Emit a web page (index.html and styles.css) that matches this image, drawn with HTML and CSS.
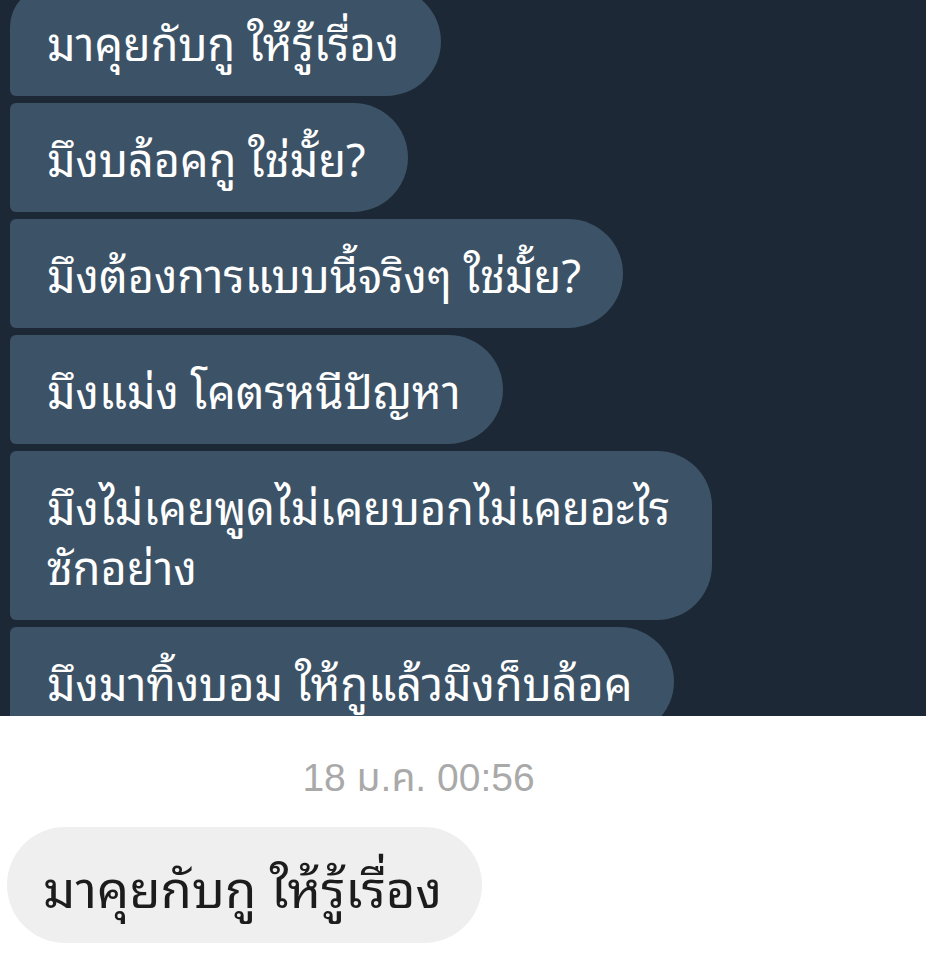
FILE: index.html
```html
<!DOCTYPE html>
<html lang="th">
<head>
    <meta charset="utf-8">
    <title>แชท</title>
    <link rel="stylesheet" href="styles.css">
</head>
<body>
<div class="dark">
    <div class="bubble first">มาคุยกับกู ให้รู้เรื่อง</div>
    <div class="bubble">มึงบล้อคกู ใช่มั้ย?</div>
    <div class="bubble">มึงต้องการแบบนี้จริงๆ ใช่มั้ย?</div>
    <div class="bubble">มึงแม่ง โคตรหนีปัญหา</div>
    <div class="bubble">มึงไม่เคยพูดไม่เคยบอกไม่เคยอะไร<br/>ซักอย่าง</div>
    <div class="bubble">มึงมาทิ้งบอม ให้กูแล้วมึงก็บล้อค</div>
</div>
<div class="light">
    <div class="stamp">18 ม.ค. 00:56</div>
    <div class="grey-bubble">มาคุยกับกู ให้รู้เรื่อง</div>
</div>
</body>
</html>
```

FILE: styles.css
```css
* {
    box-sizing: border-box;
}
body {
    margin: 0;
    background: #ffffff;
    font-family: "Noto Sans Thai Looped", "Noto Sans Thai", sans-serif;
}
.dark {
    height: 716px;
    overflow: hidden;
    background: #1c2835;
    padding-left: 10px;
    display: flex;
    flex-direction: column;
    align-items: flex-start;
    gap: 7px;
}
.bubble {
    background: #3c5266;
    color: #ffffff;
    font-size: 45px;
    line-height: 60px;
    padding: 24px 42px 25px 37px;
    border-radius: 6px 55px 55px 6px;
    flex-shrink: 0;
}
.first {
    margin-top: -13px;
    border-top-left-radius: 40px;
}
.light {
    padding: 40px 0 0 7px;
}
.stamp {
    text-align: center;
    color: #a9a9a9;
    font-family: "Liberation Sans", "Noto Sans Thai", sans-serif;
    font-size: 39px;
    line-height: 44px;
    padding-right: 96px;
}
.grey-bubble {
    display: inline-block;
    margin-top: 27px;
    background: #efefef;
    color: #1c1c1c;
    font-size: 51px;
    line-height: 64px;
    padding: 26px 40px 26px 36px;
    border-radius: 58px;
}
```
